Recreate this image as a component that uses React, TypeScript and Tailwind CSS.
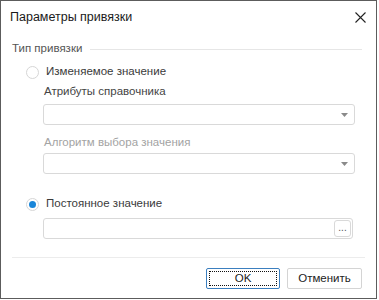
const font = { fontFamily: '"Liberation Sans", Arial, sans-serif' };

function Radio({ checked }: { checked?: boolean }) {
  return (
    <span className="flex h-[13px] w-[13px] items-center justify-center rounded-full border border-[#d6d6d6] bg-white">
      {checked && <span className="h-[7px] w-[7px] rounded-full bg-[#1a86d9]" />}
    </span>
  );
}

function Select() {
  return (
    <div className="flex h-[21px] items-center justify-end rounded-[3px] border border-[#d9d9d9] bg-white pr-[6px]">
      <svg width="7" height="4" viewBox="0 0 7 4">
        <path d="M0 0h7L3.5 4z" fill="#8a8a8a" />
      </svg>
    </div>
  );
}

export default function App() {
  return (
    <div
      className="flex h-[299px] w-[377px] flex-col border border-[#5c5c5c] bg-white text-[11.5px] text-[#333]"
      style={font}
    >
      <div className="flex h-8 items-center justify-between pl-[9px] pr-[10px]">
        <span className="text-[12.5px] text-[#1a1a1a]">Параметры привязки</span>
        <svg width="11" height="11" viewBox="0 0 11 11">
          <path d="M0.5 0.5l10 10M10.5 0.5l-10 10" stroke="#222" strokeWidth="1.1" />
        </svg>
      </div>

      <div className="mt-2 flex h-4 items-center pl-[11px] pr-[14px]">
        <span className="text-[#555]">Тип привязки</span>
        <div className="ml-[8px] h-px flex-1 bg-[#e6e6e6]" />
      </div>

      <div className="mt-[7px] flex h-4 items-center gap-[7px] pl-[25px]">
        <Radio />
        <span className="text-[#3a3a3a]">Изменяемое значение</span>
      </div>

      <div className="ml-[42px] mr-[21px] flex flex-col">
        <div className="mt-1 flex h-4 items-center pl-px text-[#444]">Атрибуты справочника</div>
        <div className="mt-1">
          <Select />
        </div>
        <div className="mt-[10px] flex h-4 items-center pl-px text-[#a3a3a3]">Алгоритм выбора значения</div>
        <div className="mt-[2px]">
          <Select />
        </div>
      </div>

      <div className="mt-[22px] flex h-4 items-center gap-[7px] pl-[25px]">
        <Radio checked />
        <span className="text-[#3a3a3a]">Постоянное значение</span>
      </div>

      <div className="ml-[42px] mr-[23px] mt-[6px] flex h-[21px] items-center justify-end rounded-[3px] border border-[#d9d9d9] bg-white pr-px">
        <div className="flex h-[17px] w-[17px] items-end justify-center rounded-[3px] border border-[#d9d9d9] pb-[3px] text-[10px] leading-none text-[#555]">
          ...
        </div>
      </div>

      <div className="mx-[11px] mt-[18px] h-px bg-[#ececec]" />

      <div className="mt-[10px] flex justify-end gap-[7px] pr-[14px]">
        <button className="flex h-[21px] w-[74px] items-center justify-center rounded-[2px] border border-[#3b7fbf] bg-white p-[2px]">
          <span className="flex h-full w-full items-center justify-center border border-dotted border-[#111] text-[#222]">
            OK
          </span>
        </button>
        <button className="flex h-[21px] w-[75px] items-center justify-center rounded-[2px] border border-[#d4d4d4] bg-white text-[#222]">
          Отменить
        </button>
      </div>
    </div>
  );
}
